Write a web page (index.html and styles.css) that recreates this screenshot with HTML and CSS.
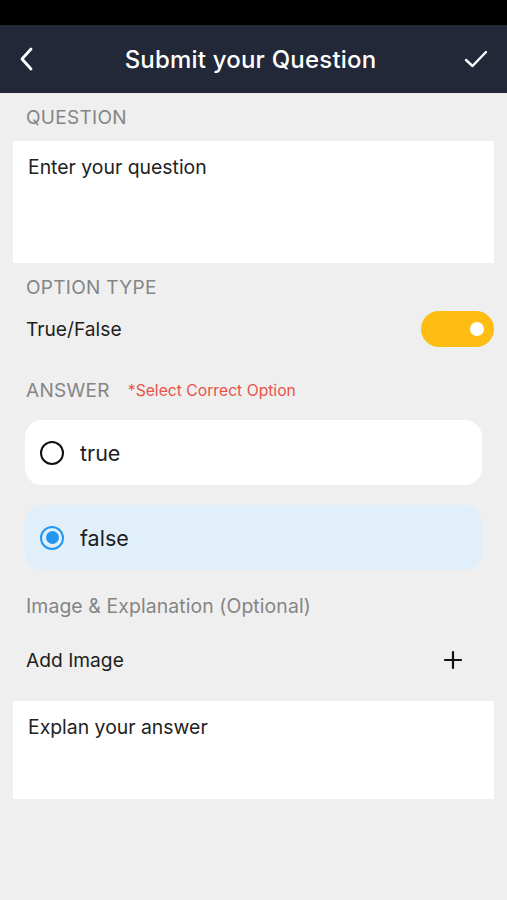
FILE: index.html
```html
<!DOCTYPE html>
<html>
<head>
<meta charset="utf-8">
<link rel="stylesheet" href="styles.css">
</head>
<body>
<div class="status"></div>
<header class="nav">
  <svg class="nav-icon back" width="20" height="26" viewBox="0 0 20 26"><path d="M14 3 L5 13 L14 23" fill="none" stroke="#fff" stroke-width="2.8" stroke-linecap="round" stroke-linejoin="round"/></svg>
  <h1 class="nav-title">Submit your Question</h1>
  <svg class="nav-icon check" width="24" height="20" viewBox="0 0 24 20"><path d="M2 11 L8.5 17 L22 3" fill="none" stroke="#fff" stroke-width="2.4" stroke-linecap="round" stroke-linejoin="round"/></svg>
</header>
<main class="content">
  <div class="label">QUESTION</div>
  <div class="textbox big">Enter your question</div>

  <div class="label">OPTION TYPE</div>
  <div class="row toggle-row">
    <span class="row-text">True/False</span>
    <span class="toggle"><span class="knob"></span></span>
  </div>

  <div class="label answer-label">ANSWER <span class="hint">*Select Correct Option</span></div>
  <div class="option">
    <span class="radio"></span><span class="opt-text">true</span>
  </div>
  <div class="option selected">
    <span class="radio on"></span><span class="opt-text">false</span>
  </div>

  <div class="label sub">Image &amp; Explanation (Optional)</div>
  <div class="row add-row">
    <span class="row-text">Add Image</span>
    <svg class="plus" width="20" height="20" viewBox="0 0 20 20"><path d="M10 2 V18 M2 10 H18" stroke="#111" stroke-width="2.2" stroke-linecap="round"/></svg>
  </div>
  <div class="textbox small">Explan your answer</div>
</main>
</body>
</html>
```
FILE: styles.css
```css
* { box-sizing: border-box; }
html, body { margin: 0; padding: 0; }
body {
  background: #efefef;
  font-family: Inter, "Noto Sans", sans-serif;
  width: 507px;
  height: 900px;
  overflow: hidden;
}
.status { height: 25px; background: #000; }
.nav {
  height: 68px;
  background: #232839;
  display: flex;
  align-items: center;
  justify-content: space-between;
  padding: 0 19px 0 17px;
}
.nav-title {
  margin: 0;
  color: #fff;
  font-size: 24px;
  font-weight: 500;
  letter-spacing: 0.2px;
}
.nav-icon { display: block; }
.content { display: flex; flex-direction: column; }
.label {
  height: 48px;
  display: flex;
  align-items: center;
  padding-left: 26px;
  color: #858585;
  font-size: 19px;
  letter-spacing: 0.3px;
}
.textbox {
  background: #fff;
  margin: 0 13px;
  padding: 13px 15px;
  font-size: 19.4px;
  line-height: 26px;
  color: #222;
}
.textbox.big { height: 122px; }
.textbox.small { height: 98px; margin-top: 17px; }
.row {
  display: flex;
  align-items: center;
  justify-content: space-between;
  padding: 0 13px 0 26px;
  font-size: 19.2px;
  color: #1e1e1e;
}
.toggle-row { height: 36px; }
.toggle {
  width: 73px;
  height: 36px;
  border-radius: 18px;
  background: #fdbd12;
  display: flex;
  align-items: center;
  justify-content: flex-end;
  padding-right: 10px;
}
.knob {
  width: 14px;
  height: 14px;
  border-radius: 50%;
  background: #fff;
}
.answer-label { margin-top: 19px; }
.hint {
  color: #e8524a;
  font-size: 15.7px;
  margin-left: 18px;
  letter-spacing: 0;
}
.option {
  margin: 6px 25px 14px 25px;
  height: 65px;
  border-radius: 17px;
  background: #fff;
  display: flex;
  align-items: center;
  padding-left: 15px;
}
.option + .option { margin-top: 6px; }
.option.selected { background: #e1effb; }
.radio {
  width: 24px;
  height: 24px;
  border-radius: 50%;
  border: 2.5px solid #111;
  margin-right: 16px;
  display: flex;
  align-items: center;
  justify-content: center;
}
.radio.on { border-color: #2396f0; }
.radio.on::after {
  content: "";
  width: 13px;
  height: 13px;
  border-radius: 50%;
  background: #2396f0;
}
.opt-text { font-size: 21.5px; color: #1e1e1e; }
.label.sub { margin-top: -2px; font-size: 19.4px; letter-spacing: 0.1px; }
.add-row { height: 48px; margin-top: 6px; padding-right: 44px; }
.plus { display: block; }
```
